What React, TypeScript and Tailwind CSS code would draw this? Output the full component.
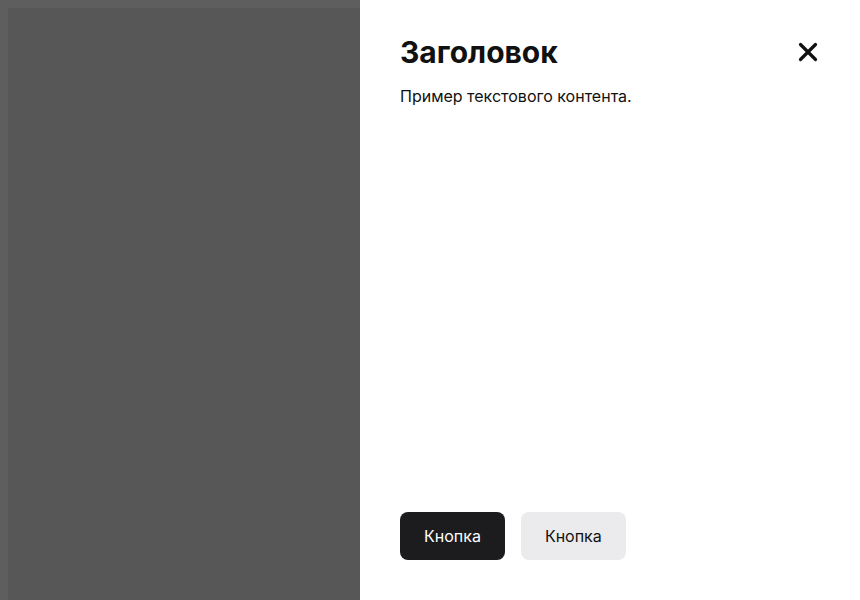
import React from "react";

export default function App() {
  return (
    <div
      className="flex h-[600px] w-[860px] overflow-hidden"
      style={{ fontFamily: "Inter, 'Noto Sans', sans-serif" }}
    >
      <div className="flex w-[360px] flex-col bg-[#5e5e5e] pl-2 pt-2">
        <div className="flex-1 bg-[#575757]" />
      </div>
      <div className="flex flex-1 flex-col bg-white px-10 pb-10 pt-8">
        <div className="flex items-center justify-between">
          <h1 className="text-[30px] font-bold leading-10 text-[#111111]">Заголовок</h1>
          <button className="flex h-6 w-6 items-center justify-center">
            <svg width="20" height="20" viewBox="0 0 20 20" fill="none">
              <path d="M2.5 2.5 L17.5 17.5 M17.5 2.5 L2.5 17.5" stroke="#111111" strokeWidth="3.2" strokeLinecap="round" />
            </svg>
          </button>
        </div>
        <p className="mt-3 text-base leading-6 text-[#111111]">Пример текстового контента.</p>
        <div className="flex-1" />
        <div className="flex gap-4">
          <button className="h-12 rounded-lg bg-[#1c1c1e] px-6 text-base text-white">Кнопка</button>
          <button className="h-12 rounded-lg bg-[#ebebed] px-6 text-base text-[#111111]">Кнопка</button>
        </div>
      </div>
    </div>
  );
}
